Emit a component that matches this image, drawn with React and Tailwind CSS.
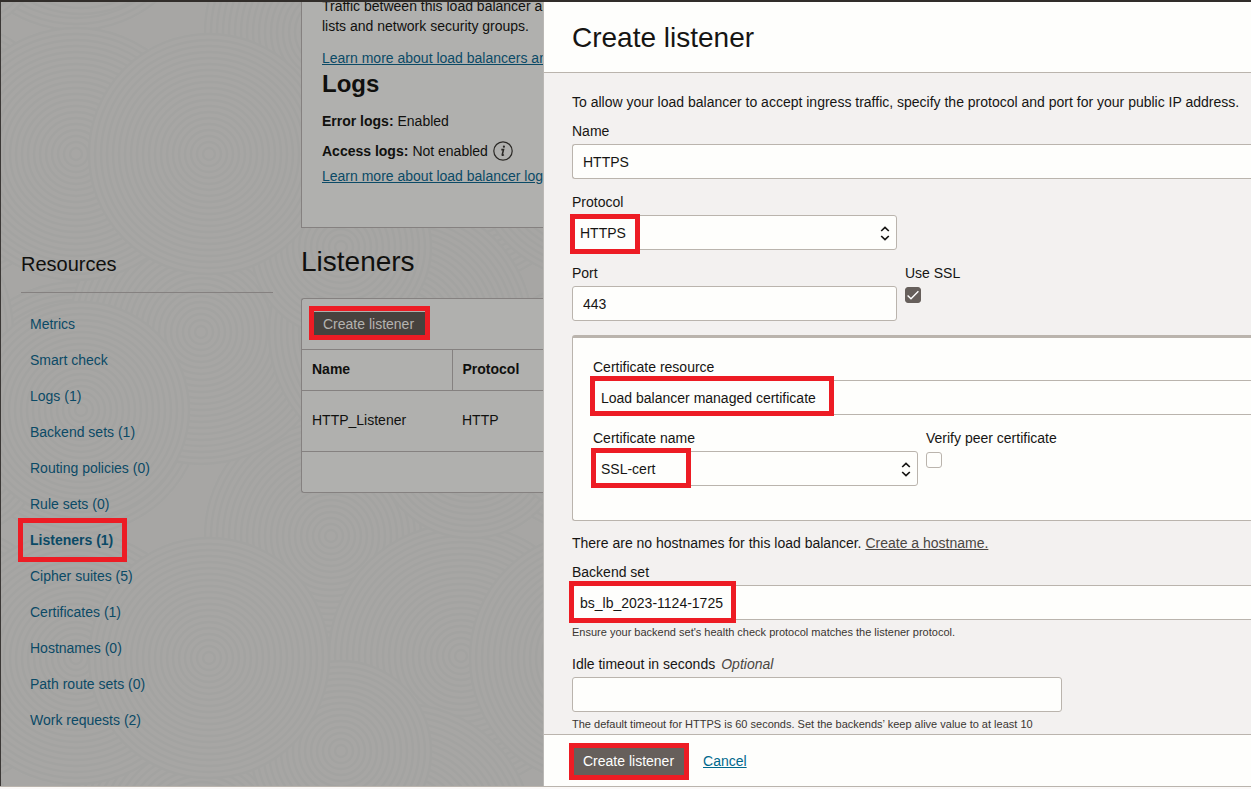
import React, { useId } from "react";

const resources = [
  "Metrics",
  "Smart check",
  "Logs (1)",
  "Backend sets (1)",
  "Routing policies (0)",
  "Rule sets (0)",
  "Listeners (1)",
  "Cipher suites (5)",
  "Certificates (1)",
  "Hostnames (0)",
  "Path route sets (0)",
  "Work requests (2)",
];

const TILE = { width: 520, height: 504 };

// Overlapping ringed discs [cx, cy, radius]; later ones cover earlier ones.
const DISCS = [
  [75, -98, 126],
  [330, 30, 126],
  [460, 150, 132],
  [200, 330, 132],
  [400, 330, 132],
  [470, 440, 96],
  [80, 408, 108],
  [340, 245, 90],
  [75, 152, 126],
  [208, 152, 120],
];

const OFFSETS = [-1, 0, 1];

function RippleBackground() {
  return (
    <svg className="absolute inset-0 h-full w-full" aria-hidden="true">
      <defs>
        <pattern id="ripples" width={TILE.width} height={TILE.height} patternUnits="userSpaceOnUse">
          {DISCS.map(([cx, cy, radius]) =>
            OFFSETS.map((ox) =>
              OFFSETS.map((oy) => (
                <g
                  key={[cx, cy, ox, oy].join(":")}
                  transform={`translate(${cx + ox * TILE.width} ${cy + oy * TILE.height})`}
                  fill="#a7a6a4"
                  stroke="#a3a3a1"
                  strokeWidth="2.4"
                >
                  {Array.from({ length: radius / 6 }, (_, i) => (
                    <circle key={i} r={radius - i * 6} />
                  ))}
                </g>
              ))
            )
          )}
        </pattern>
      </defs>
      <rect width="100%" height="100%" fill="url(#ripples)" />
    </svg>
  );
}

function Highlight({ className }) {
  return <span className={"pointer-events-none absolute border-5 border-[#ed1c24] " + className} />;
}

function SelectField({ label, value, open, highlight, children }) {
  const id = useId();
  return (
    <div>
      <label htmlFor={id} className="block">{label}</label>
      <div className="relative mt-[3px]">
        <select
          id={id}
          defaultValue={value}
          className={
            "block h-[35px] w-full appearance-none border border-[#bab4ad] bg-[#fefefc] pl-[7px] " +
            (open ? "rounded-l-[3px] border-r-0" : "rounded-[3px]")
          }
        >
          <option>{value}</option>
        </select>
        {!open && (
          <svg
            className="pointer-events-none absolute top-[10px] right-[7px] h-4 w-[10px]"
            viewBox="0 0 10 16"
            fill="none"
            stroke="#161513"
            strokeWidth="1.7"
            aria-hidden="true"
          >
            <path d="M1.2 6 5 2.4l3.8 3.6M1.2 11 5 14.6l3.8-3.6" />
          </svg>
        )}
        <Highlight className={highlight} />
      </div>
      {children}
    </div>
  );
}

function TextField({ label, hint, value, className }) {
  const id = useId();
  return (
    <div>
      <label htmlFor={id} className="block">
        {label}
        {hint && <em className="ml-1.5 text-[#4a4642]">{hint}</em>}
      </label>
      <input
        id={id}
        type="text"
        defaultValue={value}
        className={"mt-[3px] block h-[35px] border border-[#bab4ad] bg-[#fefefc] px-[10px] " + className}
      />
    </div>
  );
}

function CheckField({ label, checked }) {
  const id = useId();
  return (
    <div>
      <label htmlFor={id} className="block">{label}</label>
      <div className="relative mt-1 size-4">
        <input
          id={id}
          type="checkbox"
          defaultChecked={checked}
          className="peer block size-4 appearance-none rounded-[3px] border border-[#bab4ad] bg-[#fefefc] checked:border-[#665f5b] checked:bg-[#665f5b]"
        />
        <svg
          className="pointer-events-none absolute inset-0 hidden size-4 peer-checked:block"
          viewBox="0 0 16 16"
          fill="none"
          stroke="#fff"
          strokeWidth="1.4"
          aria-hidden="true"
        >
          <path d="M2.6 8.4 6 11.8 13.4 4.2" />
        </svg>
      </div>
    </div>
  );
}

function Sidebar() {
  return (
    <nav className="w-[252px] shrink-0 pt-[247px]">
      <h2 className="border-b border-[#858180] pb-[13px] text-xl leading-[30px]">Resources</h2>
      <ul className="pt-[13px] pl-[9px] text-[#0b4a66]">
        {resources.map((name) => (
          <li key={name} className="flex h-9 items-center">
            <a href="#" className={name.startsWith("Listeners") ? "relative font-bold" : ""}>
              {name}
              {name.startsWith("Listeners") && <Highlight className="-inset-y-3 -right-[14px] -left-3" />}
            </a>
          </li>
        ))}
      </ul>
    </nav>
  );
}

function InfoIcon() {
  return (
    <svg className="ml-[5px] size-5" viewBox="0 0 20 20" fill="none" stroke="#2b2926" aria-hidden="true">
      <circle cx="10" cy="10" r="9.2" strokeWidth="1.2" />
      <circle cx="10.9" cy="5.7" r="1.1" fill="#2b2926" stroke="none" />
      <path d="M8.3 8.6h2.2L9.3 13.6q-.2 1.1 1.6.2" strokeWidth="1.6" />
    </svg>
  );
}

function Details() {
  return (
    <div className="min-w-0 flex-1 whitespace-nowrap">
      <section className="-mt-1.5 border-b border-l border-[#858180] bg-[#b0b0ae] pb-[41px] pl-5">
        <p>
          Traffic between this load balancer and
          <br />
          lists and network security groups.
        </p>
        <a href="#" className="mt-3 block text-[#0b4a66] underline">Learn more about load balancers and</a>
        <h2 className="text-2xl leading-8 font-bold">Logs</h2>
        <p className="mt-[11px]"><b>Error logs:</b> Enabled</p>
        <p className="mt-[10px] flex items-center">
          <b className="mr-1">Access logs:</b>Not enabled<InfoIcon />
        </p>
        <a href="#" className="mt-[5px] block text-[#0b4a66] underline">Learn more about load balancer logs</a>
      </section>

      <h2 className="mt-4 text-[28px] leading-9">Listeners</h2>
      <section className="mt-[18px] rounded-l-[3px] border-y border-l border-[#858180] bg-[#b0b0ae]">
        <div className="px-[10px] py-[9px]">
          <button type="button" className="relative h-8 rounded-sm pr-[13px] pl-[11px] text-[#b4b3b1]">
            <span className="absolute inset-x-0 inset-y-1 bg-[#47423e]" />
            <span className="relative">Create listener</span>
            <Highlight className="-inset-x-[3px] -top-0.5 bottom-0" />
          </button>
        </div>
        <table className="w-full table-fixed text-left">
          <thead>
            <tr className="h-[41px] border-y border-[#858180]">
              <th className="w-[150px] border-r border-[#858180] pb-0.5 pl-[10px]">Name</th>
              <th className="pb-0.5 pl-[10px]">Protocol</th>
            </tr>
          </thead>
          <tbody>
            <tr className="h-[61px] border-b border-[#858180]">
              <td className="pb-0.5 pl-[10px]">HTTP_Listener</td>
              <td className="pb-0.5 pl-[10px]">HTTP</td>
            </tr>
          </tbody>
        </table>
        <div className="h-10" />
      </section>
    </div>
  );
}

function Drawer() {
  return (
    <form
      role="dialog"
      aria-labelledby="drawer-title"
      className="flex min-w-0 flex-1 flex-col overflow-hidden border-l border-[#bab8b5] bg-[#fefefc]"
    >
      <header className="shrink-0 border-b border-[#bab4ad] px-7 pt-[18px] pb-4">
        <h1 id="drawer-title" className="text-[28px] leading-9">Create listener</h1>
      </header>

      <div className="min-h-0 flex-1 overflow-hidden bg-[#f3f1f0] pt-[19px] pl-7">
        <p className="mb-[9px] whitespace-nowrap">
          To allow your load balancer to accept ingress traffic, specify the protocol and port for your public IP address.
        </p>
        <div className="flex flex-col gap-[13px]">
          <TextField label="Name" value="HTTPS" className="w-full rounded-l-[3px] border-r-0" />
          <div className="w-[325px]">
            <SelectField label="Protocol" value="HTTPS" highlight="-top-px -left-0.5 h-10 w-[70px]" />
          </div>
          <div className="flex gap-2">
            <TextField label="Port" value="443" className="w-[325px] rounded-[3px]" />
            <CheckField label="Use SSL" checked />
          </div>
        </div>
        <section className="mt-[14px] flex flex-col gap-[13px] rounded-l-[3px] border-t-3 border-b border-l border-[#bab4ad] bg-[#fefefc] pt-[19px] pb-[34px] pl-5">
          <SelectField
            label="Certificate resource"
            value="Load balancer managed certificate"
            open
            highlight="-top-1 -left-[3px] h-10 w-[244px]"
          />
          <div className="flex gap-2">
            <div className="w-[325px]">
              <SelectField label="Certificate name" value="SSL-cert" highlight="-top-[3px] -left-0.5 h-10 w-[100px]" />
            </div>
            <CheckField label="Verify peer certificate" />
          </div>
        </section>
        <p className="mt-3 mb-[9px]">
          There are no hostnames for this load balancer.{" "}
          <a href="#" className="text-[#4a4642] underline">Create a hostname.</a>
        </p>
        <SelectField
          label="Backend set"
          value="bs_lb_2023-1124-1725"
          open
          highlight="-top-1 -left-[3px] h-[42px] w-[167px]"
        >
          <p className="mt-1 text-[11px] leading-4 text-[#3a3632]">
            Ensure your backend set's health check protocol matches the listener protocol.
          </p>
        </SelectField>
        <div className="mt-[14px]">
          <TextField label="Idle timeout in seconds" hint="Optional" value="" className="w-[490px] rounded-[3px]" />
          <p className="mt-1 text-[11px] leading-4 text-[#3a3632]">
            The default timeout for HTTPS is 60 seconds. Set the backends’ keep alive value to at least 10
          </p>
        </div>
      </div>

      <footer className="flex shrink-0 items-center gap-[17px] border-t border-[#bab4ad] px-7 py-[10px]">
        <button type="button" className="relative h-[31px] bg-[#665f5b] pr-3 pl-[11px] text-white">
          Create listener
          <Highlight className="-inset-x-[3px] -top-0.5 -bottom-1" />
        </button>
        <a href="#" className="text-[#00688c] underline">Cancel</a>
      </footer>
    </form>
  );
}

export default function App() {
  return (
    <div className="flex h-screen flex-col overflow-hidden border-t-2 border-[#312d2a] bg-[#fbf9f8] font-['Liberation_Sans',Arial,sans-serif] text-sm leading-5 text-[#161513]">
      <div className="flex min-h-0 flex-1 border-b border-[#bab4ad]">
        <main className="relative w-[543px] shrink-0 overflow-hidden border-l border-[#3b3836] bg-[#a7a6a4] text-[#10100e]">
          <RippleBackground />
          <div className="relative flex gap-7 pl-5">
            <Sidebar />
            <Details />
          </div>
        </main>
        <Drawer />
      </div>
      <div className="h-0.5 shrink-0" />
    </div>
  );
}
